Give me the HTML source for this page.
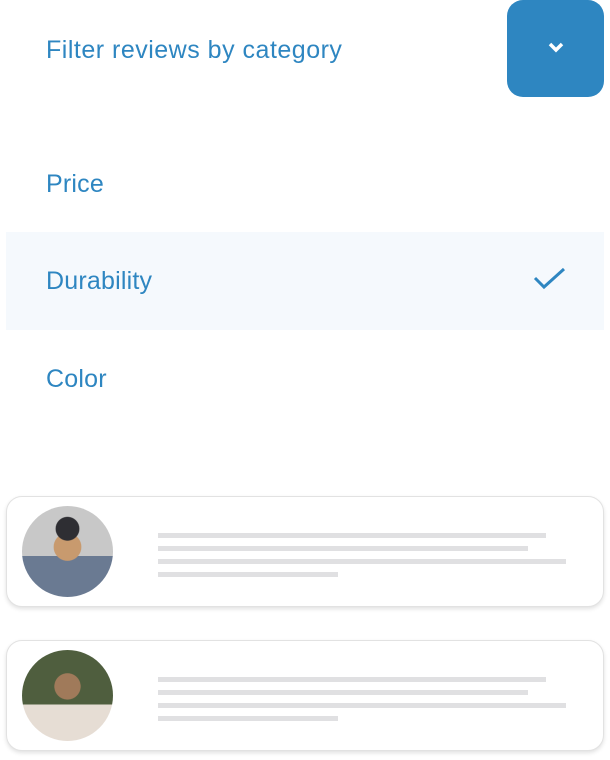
<!DOCTYPE html>
<html><head><style>
body{margin:0;width:610px;height:760px;background:#fff;font-family:"Liberation Sans",sans-serif;position:relative;overflow:hidden;color:#2e86c1}
.t{position:absolute;left:46px;font-size:25px;line-height:30px;letter-spacing:0.2px}
.btn{position:absolute;left:507px;top:0;width:97px;height:97px;background:#2e86c1;border-radius:16px}
.row{position:absolute;left:6px;top:232px;width:598px;height:98px;background:#f5f9fd}
.card{position:absolute;left:6px;width:596px;height:109px;border:1px solid #e2e2e2;border-radius:16px;box-shadow:0 2px 4px rgba(0,0,0,.12);background:#fff}
.av{position:absolute;left:15px;top:9px;width:91px;height:91px;border-radius:50%}
.l{position:absolute;left:151px;height:5px;background:#e0e0e2}
</style></head><body>
<div class="t" style="top:35px;letter-spacing:0.5px">Filter reviews by category</div>
<div class="btn"><svg width="97" height="97"><path d="M43 44l6 6 6-6" stroke="#fff" stroke-width="3.5" fill="none"/></svg></div>
<div class="t" style="top:169px">Price</div>
<div class="row"></div>
<div class="t" style="top:266px">Durability</div>
<svg style="position:absolute;left:532px;top:266px" width="36" height="26"><path d="M3 12l9 9 20-18" stroke="#2e86c1" stroke-width="3" fill="none"/></svg>
<div class="t" style="top:364px">Color</div>
<div class="card" style="top:496px"><div class="av" style="background:radial-gradient(circle at 50% 25%,#2e2e33 0 14%,transparent 15%),radial-gradient(circle at 50% 45%,#c89a6e 0 20%,transparent 21%),linear-gradient(#c8c8c8 0 55%,#6a7a92 55%)"></div>
<div class="l" style="top:36px;width:388px"></div><div class="l" style="top:49px;width:370px"></div><div class="l" style="top:62px;width:408px"></div><div class="l" style="top:75px;width:180px"></div></div>
<div class="card" style="top:640px"><div class="av" style="background:radial-gradient(circle at 50% 40%,#a07a5a 0 18%,transparent 19%),linear-gradient(#4f5e3e 0 60%,#e6ddd4 60%)"></div>
<div class="l" style="top:36px;width:388px"></div><div class="l" style="top:49px;width:370px"></div><div class="l" style="top:62px;width:408px"></div><div class="l" style="top:75px;width:180px"></div></div>
</body></html>
